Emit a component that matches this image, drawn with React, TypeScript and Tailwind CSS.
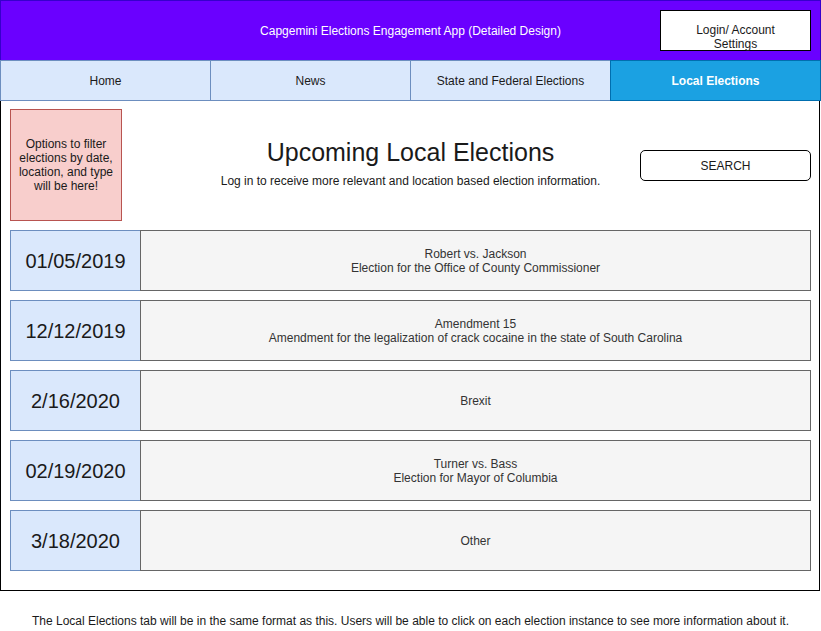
import React from "react";

const rows = [
  { date: "01/05/2019", lines: ["Robert vs. Jackson", "Election for the Office of County Commissioner"] },
  { date: "12/12/2019", lines: ["Amendment 15", "Amendment for the legalization of crack cocaine in the state of South Carolina"] },
  { date: "2/16/2020", lines: ["Brexit"] },
  { date: "02/19/2020", lines: ["Turner vs. Bass", "Election for Mayor of Columbia"] },
  { date: "3/18/2020", lines: ["Other"] },
];

const tabs = [
  { label: "Home", w: "w-[211px]", active: false },
  { label: "News", w: "w-[201px]", active: false },
  { label: "State and Federal Elections", w: "w-[201px]", active: false },
  { label: "Local Elections", w: "flex-1", active: true },
];

export default function App() {
  return (
    <div className="w-[821px] h-[631px] bg-white text-black overflow-hidden" style={{ fontFamily: '"Liberation Sans", Arial, sans-serif' }}>
      <div className="h-[60px] bg-[#6a00ff] border border-b-0 border-[#3700cc] grid grid-cols-[1fr_auto_1fr] items-center">
        <div />
        <div className="text-white text-[12px] leading-[14px] pt-[1px]">Capgemini Elections Engagement App (Detailed Design)</div>
        <div className="flex justify-end pr-[9px]">
          <div className="w-[151px] h-[41px] bg-white border border-black text-[12px] leading-[14px] text-center pt-[12px] text-[#1a1a1a]">
            Login/ Account<br />Settings
          </div>
        </div>
      </div>
      <div className="flex h-[41px]">
        {tabs.map((t) => (
          <div
            key={t.label}
            className={`${t.w} flex items-center justify-center text-[12px] border ${t.active ? "bg-[#1ba1e2] border-[#006eaf] text-white font-bold" : "bg-[#dae8fc] border-[#6c8ebf] text-[#1a1a1a]"} -ml-px first:ml-0`}
          >
            {t.label}
          </div>
        ))}
      </div>
      <div className="w-[820px] h-[490px] border border-t-0 border-black pt-[8px] pl-[9px] pr-[8px]">
        <div className="grid grid-cols-[1fr_auto_1fr] h-[112px]">
          <div>
            <div className="w-[112px] h-[112px] bg-[#f8cecc] border border-[#b85450] flex items-center justify-center text-center text-[12px] leading-[14px] text-[#1a1a1a] px-[6px]">
              Options to filter elections by date, location, and type will be here!
            </div>
          </div>
          <div className="flex flex-col items-center pt-[29px]">
            <div className="text-[25px] leading-[28px] text-[#1a1a1a]">Upcoming Local Elections</div>
            <div className="text-[12px] leading-[14px] mt-[8px] text-[#1a1a1a]">Log in to receive more relevant and location based election information.</div>
          </div>
          <div className="flex justify-end pt-[41px]">
            <div className="w-[171px] h-[31px] border border-black rounded-[5px] flex items-center justify-center text-[12px] text-[#1a1a1a]">SEARCH</div>
          </div>
        </div>
        <div className="flex flex-col gap-[9px] mt-[9px]">
          {rows.map((r) => (
            <div key={r.date} className="flex h-[61px]">
              <div className="w-[131px] bg-[#dae8fc] border border-[#6c8ebf] flex items-center justify-center text-[20px] text-[#1a1a1a]">
                {r.date}
              </div>
              <div className="flex-1 -ml-px bg-[#f5f5f5] border border-[#666666] flex flex-col items-center justify-center text-[12px] leading-[14px] text-[#333333]">
                {r.lines.map((l) => (
                  <div key={l}>{l}</div>
                ))}
              </div>
            </div>
          ))}
        </div>
      </div>
      <div className="text-center text-[12px] leading-[14px] mt-[23px] text-[#1a1a1a]">
        The Local Elections tab will be in the same format as this. Users will be able to click on each election instance to see more information about it.
      </div>
    </div>
  );
}
